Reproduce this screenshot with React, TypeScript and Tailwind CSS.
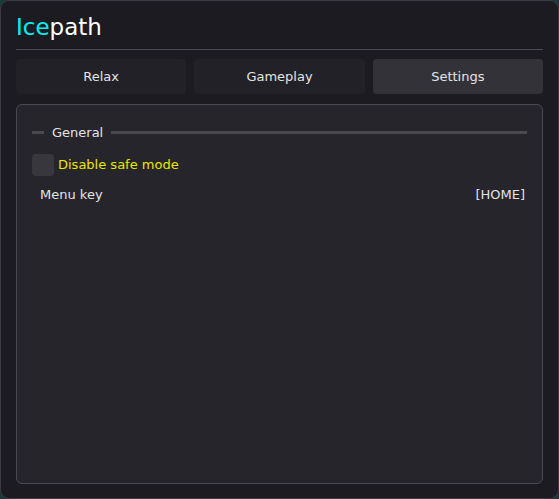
import React from "react";

export default function App() {
  const tabs = ["Relax", "Gameplay", "Settings"];
  return (
    <div
      className="w-[559px] h-[499px] bg-[#173a3e] overflow-hidden"
      style={{ fontFamily: '"DejaVu Sans", Verdana, sans-serif' }}
    >
      <div className="w-full h-full rounded-[9px] border border-[#3a3a44] bg-[#1c1b21] px-[15px] flex flex-col">
        <div className="h-[49px] flex items-end pb-[10px] text-[23px] leading-none text-white border-b border-[#4a4a52]">
          <span className="text-[#00f0f0]">Ice</span>
          <span>path</span>
        </div>
        <div className="mt-[9px] flex gap-[8px] h-[35px]">
          {tabs.map((t, i) => (
            <div
              key={t}
              className={`flex-1 rounded-[4px] flex items-center justify-center text-[13px] text-[#e4e4e4] ${
                i === 2 ? "bg-[#333238]" : "bg-[#222127]"
              }`}
            >
              {t}
            </div>
          ))}
        </div>
        <div className="mt-[10px] mb-[14px] flex-1 rounded-[6px] border border-[#4a4953] bg-[#26252b] px-[15px] pt-[21px]">
          <div className="flex items-center gap-[8px] text-[13px] text-[#e4e4e4]">
            <div className="w-[12px] h-[3px] bg-[#4a4950]" />
            <span className="leading-none">General</span>
            <div className="flex-1 h-[3px] bg-[#4a4950]" />
          </div>
          <div className="mt-[15px] flex items-center gap-[4px]">
            <div className="w-[22px] h-[22px] rounded-[4px] bg-[#38373d]" />
            <span className="text-[13px] text-[#e6e600]">Disable safe mode</span>
          </div>
          <div className="mt-[9px] flex items-center justify-between pl-[8px] pr-[2px] text-[13px] text-[#e4e4e4]">
            <span>Menu key</span>
            <span>[HOME]</span>
          </div>
        </div>
      </div>
    </div>
  );
}
